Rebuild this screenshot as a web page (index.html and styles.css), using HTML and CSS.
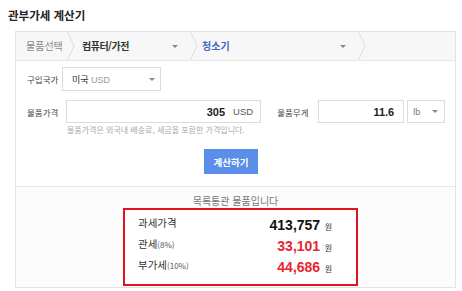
FILE: index.html
```html
<!DOCTYPE html>
<html lang="ko">
<head>
    <meta charset="UTF-8">
    <meta name="viewport" content="width=device-width, initial-scale=1.0">
    <title>관부가세 계산기</title>
    <link rel="stylesheet" href="styles.css">
</head>
<body>

    <h1 class="title">관부가세 계산기</h1>

    <div class="calc">
        <div class="crumbs">
            <div class="crumb first">물품선택</div>
            <svg class="sep" width="8" height="28" viewBox="0 0 8 28"><polyline points="0.5,0 7,14 0.5,28" fill="none" stroke="#dcdcdc" stroke-width="1"/></svg>
            <div class="crumb cat">
                <span>컴퓨터/가전</span>
                <i class="arrow"></i>
            </div>
            <svg class="sep" width="8" height="28" viewBox="0 0 8 28"><polyline points="0.5,0 7,14 0.5,28" fill="none" stroke="#dcdcdc" stroke-width="1"/></svg>
            <div class="crumb sub">
                <span>청소기</span>
                <i class="arrow"></i>
            </div>
            <svg class="sep" width="8" height="28" viewBox="0 0 8 28"><polyline points="0.5,0 7,14 0.5,28" fill="none" stroke="#dcdcdc" stroke-width="1"/></svg>
        </div>

        <div class="form">
            <div class="row">
                <label class="label">구입국가</label>
                <div class="select country">
                    <span>미국 <em>USD</em></span>
                    <i class="arrow"></i>
                </div>
            </div>
            <div class="row second">
                <label class="label">물품가격</label>
                <div class="field price">
                    <b>305</b>
                    <span class="unit">USD</span>
                </div>
                <label class="label weight-label">물품무게</label>
                <div class="field weight">
                    <b>11.6</b>
                </div>
                <div class="select lb">
                    <span>lb</span>
                    <i class="arrow"></i>
                </div>
            </div>
            <p class="help">물품가격은 외국내 배송료, 세금을 포함한 가격입니다.</p>
            <div class="actions">
                <button class="calc-btn" onclick="calculate()">계산하기</button>
            </div>
        </div>

        <div class="result">
            <p class="notice">목록통관 물품입니다</p>
            <div class="summary">
                <div class="line">
                    <span class="name">과세가격</span>
                    <span class="value"><b>413,757</b> <small>원</small></span>
                </div>
                <div class="line">
                    <span class="name">관세<small>(8%)</small></span>
                    <span class="value red"><b>33,101</b> <small>원</small></span>
                </div>
                <div class="line">
                    <span class="name">부가세<small>(10%)</small></span>
                    <span class="value red"><b>44,686</b> <small>원</small></span>
                </div>
            </div>
        </div>
    </div>

    <script>
        function calculate() {
            // values are fixed in this snapshot
        }
    </script>

</body>
</html>
```

FILE: styles.css
```css
body {
    margin: 0;
    padding: 8px;
    font-family: "Noto Sans CJK KR", "Noto Sans", sans-serif;
    color: #333;
    background: #fff;
}
.title {
    margin: 0;
    font-size: 11.5px;
    line-height: 14px;
    font-weight: bold;
    color: #222;
}
.calc {
    margin: 9px 0 0 7px;
    width: 439px;
    border: 1px solid #e3e3e3;
}
.crumbs {
    display: flex;
    height: 28px;
    background: #f7f7f7;
    border-bottom: 1px solid #e6e6e6;
    font-size: 10px;
}
.crumb {
    display: flex;
    align-items: center;
    line-height: 28px;
}
.crumb.first {
    width: 41px;
    padding-left: 10px;
    color: #8a8a8a;
}
.crumb.cat {
    width: 108px;
    padding-left: 7px;
    justify-content: space-between;
    font-weight: bold;
    color: #333;
    letter-spacing: -0.5px;
}
.crumb.sub {
    width: 156px;
    padding-left: 4px;
    justify-content: space-between;
    font-weight: bold;
    color: #3c6dc0;
}
.crumb .arrow {
    margin-right: 12px;
}
.sep {
    flex: none;
}
.arrow {
    display: inline-block;
    width: 0;
    height: 0;
    border-left: 3px solid transparent;
    border-right: 3px solid transparent;
    border-top: 3px solid #888;
}
.form {
    padding: 6px 10px 12px 11px;
    border-bottom: 1px solid #e8e8e8;
}
.row {
    display: flex;
    align-items: center;
}
.row.second {
    margin-top: 9px;
}
.label {
    font-size: 8.5px;
    color: #444;
    width: 35px;
}
.select {
    display: flex;
    align-items: center;
    justify-content: space-between;
    height: 22px;
    border: 1px solid #dcdcdc;
    background: #fff;
    font-size: 9px;
    color: #333;
    box-sizing: content-box;
}
.select em {
    font-style: normal;
    font-family: "Liberation Sans", Arial, sans-serif;
    color: #999;
}
.select.country {
    width: 83px;
    padding: 0 5px 0 9px;
}
.field {
    display: flex;
    align-items: center;
    justify-content: flex-end;
    height: 21px;
    border: 1px solid #dcdcdc;
    background: #fff;
    font-family: "Liberation Sans", Arial, sans-serif;
}
.field b {
    font-size: 11px;
    color: #222;
}
.field.price {
    margin-left: 4px;
    width: 188px;
    padding-right: 7px;
}
.unit {
    margin-left: 8px;
    font-size: 9.5px;
    color: #555;
}
.weight-label {
    margin-left: 16px;
    width: 41px;
}
.field.weight {
    width: 76px;
    padding-right: 9px;
}
.select.lb {
    margin-left: 3px;
    width: 25px;
    height: 21px;
    padding: 0 6px 0 5px;
    font-family: "Liberation Sans", Arial, sans-serif;
    color: #777;
}
.help {
    margin: 2px 0 0 40px;
    font-size: 8px;
    line-height: 10px;
    color: #aaa;
}
.actions {
    display: flex;
    padding-left: 177px;
    margin-top: 14px;
}
.calc-btn {
    width: 54px;
    height: 25px;
    padding: 0;
    border: none;
    background: #5b8ee9;
    color: #fff;
    font-family: "Noto Sans CJK KR", sans-serif;
    font-size: 9.5px;
    font-weight: bold;
    cursor: pointer;
}
.result {
    background: #fcfcfc;
    padding: 7px 0 1px 0;
}
.notice {
    margin: 0;
    text-align: center;
    font-size: 10px;
    line-height: 14px;
    color: #777;
}
.summary {
    margin-left: 107px;
    width: 231px;
    height: 72px;
    border: 2px solid #e0141e;
    background: #fff;
    padding-top: 2px;
    box-sizing: content-box;
}
.line {
    display: flex;
    justify-content: space-between;
    align-items: center;
    height: 21px;
    padding: 0 24px 0 13px;
}
.name {
    font-size: 10.5px;
    color: #333;
}
.name small {
    font-size: 8px;
    color: #555;
}
.value b {
    font-family: "Liberation Sans", Arial, sans-serif;
    font-size: 14px;
    color: #111;
}
.value small {
    font-size: 8px;
    color: #333;
}
.value.red b {
    color: #e5262e;
}
```
